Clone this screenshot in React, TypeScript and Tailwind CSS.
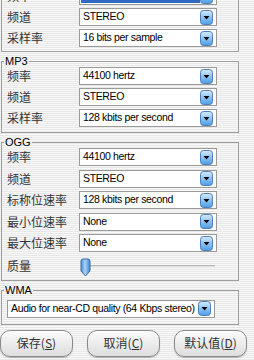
import type { ReactNode } from 'react'

const latin = "font-['Liberation_Sans',Arial,sans-serif]"
const cjk = "font-['Noto_Sans_CJK_SC','Noto_Sans',sans-serif]"

function ArrowButton() {
  return (
    <svg width="13" height="15" viewBox="0 0 13 15" className="shrink-0">
      <defs>
        <linearGradient id="ab" x1="0" y1="0" x2="0" y2="1">
          <stop offset="0" stopColor="#d6ecfd" />
          <stop offset="0.5" stopColor="#8cc4f4" />
          <stop offset="1" stopColor="#4d9be6" />
        </linearGradient>
      </defs>
      <rect x="0.5" y="0.5" width="12" height="14" rx="3" fill="url(#ab)" stroke="#4f7fb6" />
      <path d="M3.5 6 H9.5 L6.5 9.5 Z" fill="#000" />
    </svg>
  )
}

function Select({ value, width = 'w-[138px]', selected = false }: { value: string; width?: string; selected?: boolean }) {
  return (
    <div className={`flex h-[18px] ${width} items-center border border-[#9a9a9a] bg-white pl-[1px] pr-[3px]`}>
      <span
        className={`flex h-[14px] flex-1 items-center truncate pl-[2px] text-[10.5px] tracking-[-0.35px] ${latin} ${
          selected ? 'bg-[#316ac5] text-white' : 'text-black'
        }`}
      >
        {value}
      </span>
      <ArrowButton />
    </div>
  )
}

function Row({ label, children }: { label: string; children: ReactNode }) {
  return (
    <div className="flex h-[18px] items-center">
      <span className={`w-[72px] text-[12px] leading-[18px] text-[#333] ${cjk}`}>{label}</span>
      {children}
    </div>
  )
}

function Group({ title, className = '', children }: { title: string; className?: string; children: ReactNode }) {
  return (
    <fieldset className={`ml-[1px] w-[238px] border border-[#9e9e9e] pl-[5px] ${className}`}>
      <legend className={`-ml-[3px] px-[1px] text-[11px] leading-[11px] text-black ${latin}`}>{title}</legend>
      {children}
    </fieldset>
  )
}

function Slider() {
  return (
    <div className="relative h-[20px] w-[138px]">
      <div className="absolute left-[2px] right-[2px] top-[9px] h-[2px] border-t border-[#b4b4b4] bg-[#e4e4e4]" />
      <svg width="11" height="19" viewBox="0 0 11 19" className="absolute left-[1px] top-[2px]">
        <defs>
          <linearGradient id="th" x1="0" y1="0" x2="1" y2="0">
            <stop offset="0" stopColor="#4a8fdc" />
            <stop offset="0.45" stopColor="#a9d3f8" />
            <stop offset="1" stopColor="#3f86d8" />
          </linearGradient>
        </defs>
        <path d="M1 3 Q1 1 3 1 H8 Q10 1 10 3 V13 L5.5 18 L1 13 Z" fill="url(#th)" stroke="#41699b" />
      </svg>
    </div>
  )
}

function AquaButton({ label, hot }: { label: string; hot: string }) {
  return (
    <button
      className={`flex h-[27px] w-[73px] items-center justify-center rounded-[10px] border border-[#8a8a8a] bg-gradient-to-b from-[#fbfbfb] via-[#ececec] to-[#dedede] text-[12px] text-[#333] shadow-[inset_0_1px_0_#fff,0_1px_1px_rgba(0,0,0,0.25)] ${cjk}`}
    >
      {label}(<u>{hot}</u>)
    </button>
  )
}

export default function App() {
  return (
    <div className="h-[360px] w-[254px] overflow-hidden bg-[image:repeating-linear-gradient(180deg,#f8f8f8_0px,#f8f8f8_1px,#e8e8e8_1px,#e8e8e8_2px)]">
      {/* first group is scrolled partly out of view, as in the screenshot */}
      <Group title="WAV" className="-mt-[24px] pb-[4px]">
        <div className="flex flex-col gap-[3px]">
          <Row label="频率">
            <Select value="44100 hertz" selected />
          </Row>
          <Row label="频道">
            <Select value="STEREO" />
          </Row>
          <Row label="采样率">
            <Select value="16 bits per sample" />
          </Row>
        </div>
      </Group>

      <Group title="MP3" className="mt-[4px] pb-[5px]">
        <div className="flex flex-col gap-[3px]">
          <Row label="频率">
            <Select value="44100 hertz" />
          </Row>
          <Row label="频道">
            <Select value="STEREO" />
          </Row>
          <Row label="采样率">
            <Select value="128 kbits per second" />
          </Row>
        </div>
      </Group>

      <Group title="OGG" className="mt-[4px] pb-[4px]">
        <div className="flex flex-col gap-[3.5px]">
          <Row label="频率">
            <Select value="44100 hertz" />
          </Row>
          <Row label="频道">
            <Select value="STEREO" />
          </Row>
          <Row label="标称位速率">
            <Select value="128 kbits per second" />
          </Row>
          <Row label="最小位速率">
            <Select value="None" />
          </Row>
          <Row label="最大位速率">
            <Select value="None" />
          </Row>
          <div className="flex h-[20px] items-center">
            <span className={`w-[72px] text-[12px] text-[#333] ${cjk}`}>质量</span>
            <Slider />
          </div>
        </div>
      </Group>

      <Group title="WMA" className="mt-[4px] pb-[6px]">
        <div className="pt-[4px]">
          <Select value="Audio for near-CD quality (64 Kbps stereo)" width="w-[208px]" />
        </div>
      </Group>

      <div className="mt-[5px] flex w-[247px] justify-between">
        <AquaButton label="保存" hot="S" />
        <AquaButton label="取消" hot="C" />
        <AquaButton label="默认值" hot="D" />
      </div>
    </div>
  )
}
